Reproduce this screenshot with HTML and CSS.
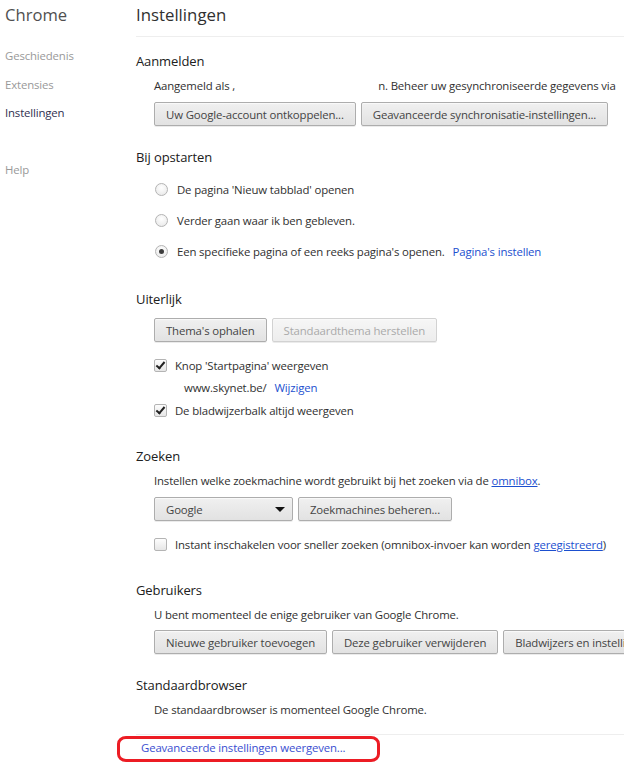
FILE: index.html
```html
<!DOCTYPE html>
<html lang="nl">
<head>
<meta charset="utf-8">
<title>Instellingen</title>
<link rel="stylesheet" href="styles.css">
</head>
<body>
<div class="page">
  <nav class="sidebar">
    <div class="brand">Chrome</div>
    <ul class="nav">
      <li class="nav-item">Geschiedenis</li>
      <li class="nav-item">Extensies</li>
      <li class="nav-item active">Instellingen</li>
      <li class="nav-item help">Help</li>
    </ul>
  </nav>
  <main class="main">
    <header class="page-header">Instellingen</header>

    <section class="section first">
      <h2 class="section-title">Aanmelden</h2>
      <div class="text-row">Aangemeld als ,<span class="redacted"></span>n. Beheer uw gesynchroniseerde gegevens via</div>
      <div class="button-row">
        <button class="btn">Uw Google-account ontkoppelen...</button>
        <button class="btn">Geavanceerde synchronisatie-instellingen...</button>
      </div>
    </section>

    <section class="section">
      <h2 class="section-title">Bij opstarten</h2>
      <div class="radio-list">
        <label class="radio-row"><span class="radio"></span>De pagina 'Nieuw tabblad' openen</label>
        <label class="radio-row"><span class="radio"></span>Verder gaan waar ik ben gebleven.</label>
        <label class="radio-row"><span class="radio checked"></span>Een specifieke pagina of een reeks pagina's openen.<a class="link spaced">Pagina's instellen</a></label>
      </div>
    </section>

    <section class="section">
      <h2 class="section-title">Uiterlijk</h2>
      <div class="button-row wide-gap">
        <button class="btn">Thema's ophalen</button>
        <button class="btn disabled">Standaardthema herstellen</button>
      </div>
      <div class="check-list">
        <label class="check-row"><span class="checkbox checked"></span>Knop 'Startpagina' weergeven</label>
        <div class="url-row">www.skynet.be/<a class="link spaced">Wijzigen</a></div>
        <label class="check-row"><span class="checkbox checked"></span>De bladwijzerbalk altijd weergeven</label>
      </div>
    </section>

    <section class="section">
      <h2 class="section-title">Zoeken</h2>
      <div class="text-row">Instellen welke zoekmachine wordt gebruikt bij het zoeken via de <a class="link underline">omnibox</a>.</div>
      <div class="button-row">
        <div class="select">Google<span class="select-arrow"></span></div>
        <button class="btn">Zoekmachines beheren...</button>
      </div>
      <div class="check-list">
        <label class="check-row"><span class="checkbox"></span>Instant inschakelen voor sneller zoeken (omnibox-invoer kan worden&nbsp;<a class="link underline">geregistreerd</a>)</label>
      </div>
    </section>

    <section class="section">
      <h2 class="section-title">Gebruikers</h2>
      <div class="text-row">U bent momenteel de enige gebruiker van Google Chrome.</div>
      <div class="button-row tight">
        <button class="btn">Nieuwe gebruiker toevoegen</button>
        <button class="btn">Deze gebruiker verwijderen</button>
        <button class="btn">Bladwijzers en instellingen importeren...</button>
      </div>
    </section>

    <section class="section">
      <h2 class="section-title">Standaardbrowser</h2>
      <div class="text-row">De standaardbrowser is momenteel Google Chrome.</div>
    </section>

    <footer class="footer">
      <div class="advanced">
        <a class="link">Geavanceerde instellingen weergeven...</a>
        <span class="highlight"></span>
      </div>
    </footer>
  </main>
</div>
</body>
</html>
```

FILE: styles.css
```css
* { box-sizing: border-box; }

html, body {
  margin: 0;
  padding: 0;
  background: #fff;
}

body {
  width: 624px;
  height: 763px;
  overflow: hidden;
  font-family: "Open Sans", "Noto Sans", sans-serif;
  font-size: 11.4px;
  letter-spacing: -0.15px;
  color: #303030;
}

.page {
  display: grid;
  grid-template-columns: 136px 1fr;
  width: 624px;
}

/* Sidebar */
.sidebar {
  padding-left: 5px;
}

.brand {
  font-size: 16.6px;
  line-height: 22px;
  padding-top: 4px;
  color: #505050;
  letter-spacing: 0;
}

.nav {
  list-style: none;
  margin: 0;
  padding: 0;
  padding-top: 21px;
}

.nav-item {
  line-height: 18px;
  height: 28.5px;
  color: #999;
}

.nav-item.active {
  color: #303050;
}

.nav-item.help {
  margin-top: 28px;
}

/* Main */
.main {
  min-width: 0;
  white-space: nowrap;
}

.page-header {
  font-size: 16.8px;
  letter-spacing: 0;
  line-height: 22px;
  padding-top: 4px;
  height: 37px;
  color: #303030;
  border-bottom: 1px solid #eee;
}

.section {
  margin-top: 21px;
}

.section.first {
  margin-top: 14px;
}

.section-title {
  margin: 0;
  font-size: 13px;
  letter-spacing: -0.1px;
  font-weight: normal;
  line-height: 20px;
  color: #202020;
}

.text-row {
  margin-top: 6px;
  padding-left: 18px;
  line-height: 18px;
}

.redacted {
  display: inline-block;
  width: 143px;
}

.button-row {
  margin-top: 7px;
  padding-left: 18px;
  display: flex;
  gap: 5px;
}

.button-row.wide-gap {
  margin-top: 9px;
}

.button-row.tight {
  margin-top: 6px;
}

.btn, .select {
  height: 24px;
  padding: 0 11px;
  font-family: inherit;
  font-size: 11.4px;
  letter-spacing: -0.15px;
  color: #444;
  background: linear-gradient(#f0f0f0, #e2e2e2);
  border: 1px solid #adadad;
  border-radius: 2px;
  box-shadow: 0 1px 0 rgba(0, 0, 0, 0.08), inset 0 1px 1px #fafafa;
  white-space: nowrap;
  flex: none;
}

.btn.disabled {
  color: #aaa;
  border-color: #d2d2d2;
  background: linear-gradient(#f6f6f6, #ededed);
}

.select {
  width: 139px;
  display: flex;
  align-items: center;
  justify-content: space-between;
  padding: 0 7px 0 11px;
}

.select-arrow {
  width: 0;
  height: 0;
  border-left: 5px solid transparent;
  border-right: 5px solid transparent;
  border-top: 5px solid #111;
}

/* Radios */
.radio-list {
  margin-top: 7px;
  padding-left: 19px;
  padding-bottom: 1px;
}

.radio-row {
  display: flex;
  align-items: center;
  height: 31px;
}

.radio {
  width: 13px;
  height: 13px;
  border-radius: 50%;
  border: 1px solid #b4b4b4;
  background: radial-gradient(circle at 50% 35%, #fff, #e6e6e6);
  margin-right: 9px;
  flex: none;
  display: flex;
  align-items: center;
  justify-content: center;
}

.radio.checked::after {
  content: "";
  width: 5px;
  height: 5px;
  border-radius: 50%;
  background: #3c3c3c;
}

/* Checkboxes */
.check-list {
  margin-top: 12px;
  padding-left: 18px;
  padding-bottom: 4px;
}

.check-row {
  display: flex;
  align-items: center;
  height: 22px;
}

.checkbox {
  width: 13px;
  height: 13px;
  border: 1px solid #b4b4b4;
  border-radius: 2px;
  background: linear-gradient(#fdfdfd, #e6e6e6);
  margin-right: 8px;
  flex: none;
  position: relative;
}

.checkbox.checked::after {
  content: "";
  position: absolute;
  left: 3px;
  top: 0px;
  width: 3px;
  height: 7px;
  border-right: 2px solid #222;
  border-bottom: 2px solid #222;
  transform: rotate(40deg);
}

.url-row {
  height: 23px;
  line-height: 23px;
  padding-left: 30px;
}

/* Links */
.link {
  color: #1b4fcf;
  cursor: pointer;
}

.link.spaced {
  margin-left: 8px;
}

.link.underline {
  text-decoration: underline;
}

/* Footer */
.footer {
  margin-top: 15px;
  border-top: 1px solid #eee;
  padding-top: 4px;
}

.advanced {
  position: relative;
  padding-left: 5px;
  line-height: 18px;
}

.advanced .link {
  color: #3a4ed0;
}

.highlight {
  position: absolute;
  left: -19px;
  top: -3px;
  width: 263px;
  height: 26px;
  border: 3px solid #ec1c24;
  border-radius: 9px / 8px;
  pointer-events: none;
}
```
